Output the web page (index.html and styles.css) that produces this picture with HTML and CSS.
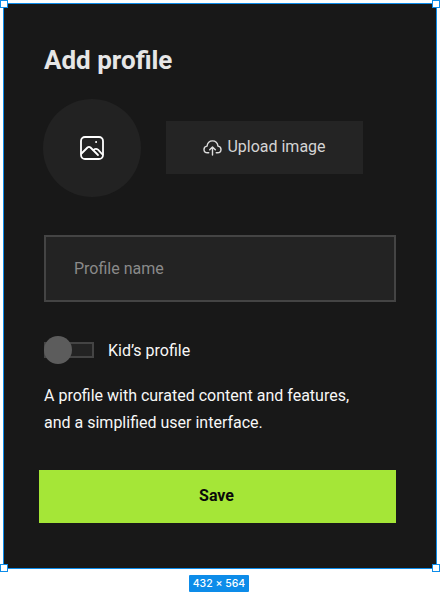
FILE: index.html
```html
<!DOCTYPE html>
<html lang="en">
<head>
<meta charset="utf-8">
<title>Add profile</title>
<link rel="stylesheet" href="styles.css">
</head>
<body>
<main class="frame">
  <span class="handle handle-tl"></span>
  <span class="handle handle-tr"></span>
  <span class="handle handle-bl"></span>
  <span class="handle handle-br"></span>
  <h1 class="title">Add profile</h1>
  <div class="avatar-row">
    <div class="avatar">
      <svg class="avatar-icon" viewBox="0 0 24 24" fill="none" stroke="#fff" stroke-width="1.8" stroke-linecap="round" stroke-linejoin="round">
        <rect x="1" y="1" width="22" height="22" rx="4"/>
        <path d="M1.500 17.500 L7.500 11.500 Q9 10.200 10.500 11.500 L18 19"/>
        <path d="M13.500 14 L15 13 Q16.500 12.400 18 13.600 L22.500 18.500"/>
        <circle cx="16" cy="6" r=".5" fill="#fff" stroke-width="1"/>
      </svg>
    </div>
    <button class="upload" type="button">
      <svg class="upload-icon" viewBox="0 0 20 18" fill="none" stroke="#ddd" stroke-width="1.500" stroke-linecap="round" stroke-linejoin="round">
        <path d="M6 14.500H4.800C2.600 14.500 1 12.900 1 11c0-1.800 1.400-3.300 3.200-3.500C4.700 4.200 7 2 10 2s5.300 2.200 5.800 5.500c1.800.2 3.200 1.700 3.200 3.500 0 1.900-1.600 3.500-3.800 3.500H14"/>
        <path d="M10 17V9M7 11.500 10 8.500l3 3"/>
      </svg>
      <span>Upload image</span>
    </button>
  </div>
  <input class="name-input" type="text" placeholder="Profile name">
  <div class="kids-row">
    <span class="toggle"><span class="knob"></span></span>
    <span class="kids-label">Kid’s profile</span>
  </div>
  <p class="description">A profile with curated content and features,<br>and a simplified user interface.</p>
  <button class="save" type="button">Save</button>
  <span class="size-badge">432 × 564</span>
</main>
</body>
</html>
```
FILE: styles.css
```css
* { box-sizing: border-box; }
html, body { margin: 0; height: 100%; background: #fff; overflow: hidden; }
body { padding: 3px 3px 0 3px; font-family: Roboto, "Liberation Sans", sans-serif; }

.frame {
  position: relative;
  width: 434px;
  height: 566px;
  border: 1px solid #0d8ce9;
  background: #181818;
  padding: 40px 40px 0 40px;
  color: #fff;
}

.handle {
  position: absolute;
  width: 8px;
  height: 8px;
  background: #fff;
  border: 1px solid #0d8ce9;
}
.handle-tl { left: -4px; top: -4px; }
.handle-tr { right: -4px; top: -4px; }
.handle-bl { left: -4px; bottom: -4px; }
.handle-br { right: -4px; bottom: -4px; }

.title {
  margin: 0;
  height: 32px;
  font-size: 26px;
  line-height: 32px;
  font-weight: 700;
  color: #e6e6e6;
}

.avatar-row {
  display: flex;
  align-items: flex-start;
  gap: 25px;
  margin: 23px 0 0 -1px;
}
.avatar {
  width: 98px;
  height: 98px;
  border-radius: 50%;
  background: #222;
  display: flex;
  align-items: center;
  justify-content: center;
}
.avatar-icon { width: 24px; height: 24px; display: block; }

.upload {
  width: 197px;
  height: 53px;
  margin-top: 22px;
  border: 0;
  background: #242424;
  color: #d4d4d4;
  font: 400 16px Roboto, "Liberation Sans", sans-serif;
  display: flex;
  align-items: center;
  justify-content: center;
  gap: 5px;
  padding: 0 0 2px 0;
}
.upload-icon { width: 19px; height: 17px; display: block; margin-top: 2px; }

.name-input {
  display: block;
  width: 352px;
  height: 67px;
  margin: 38px 0 0 0;
  border: 2px solid #444;
  background: #232323;
  padding: 0 28px;
  font: 400 16px Roboto, "Liberation Sans", sans-serif;
  color: #fff;
  outline: 0;
}
.name-input::placeholder { color: #8a8a8a; opacity: 1; }

.kids-row {
  display: flex;
  align-items: center;
  gap: 14px;
  margin: 34px 0 0 0;
  height: 28px;
}
.toggle {
  position: relative;
  display: block;
  width: 50px;
  height: 16px;
  border: 2px solid #444;
  background: #232323;
}
.knob {
  position: absolute;
  left: -2px;
  top: -8px;
  width: 28px;
  height: 28px;
  border-radius: 50%;
  background: #5c5c5c;
}
.kids-label { font-size: 16px; color: #f7f7f7; }

.description {
  margin: 18px 0 0 0;
  font-size: 16px;
  line-height: 27px;
  color: #f7f7f7;
}

.save {
  display: block;
  width: 357px;
  height: 53px;
  margin: 34px 0 0 -5px;
  border: 0;
  background: #a5e637;
  color: #0a0a0a;
  font: 700 16px Roboto, "Liberation Sans", sans-serif;
  padding: 0 2px 2px 0;
}

.size-badge {
  position: absolute;
  left: 185px;
  top: 571px;
  width: 60px;
  height: 17px;
  border-radius: 1px;
  background: #0d8ce9;
  color: #fff;
  font: 500 10.5px/17px Inter, sans-serif;
  text-align: center;
  white-space: nowrap;
}
```
